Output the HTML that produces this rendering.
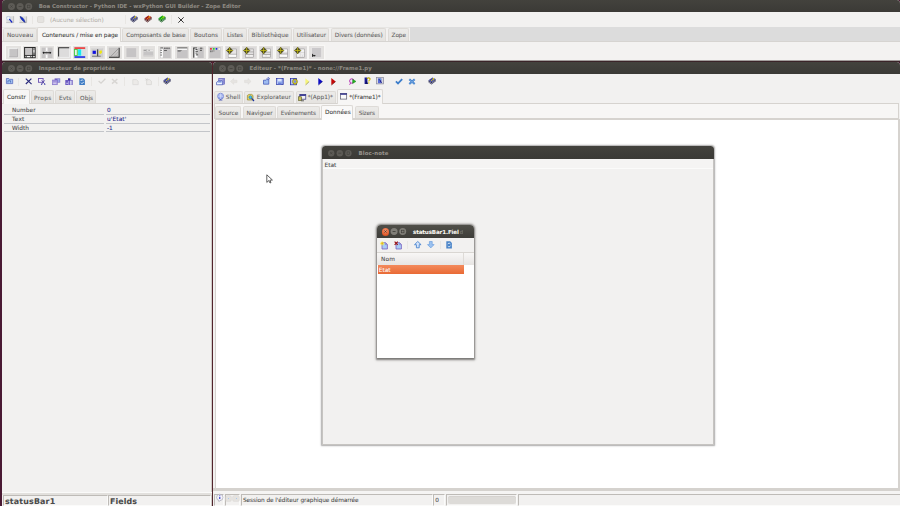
<!DOCTYPE html>
<html lang="fr">
<head>
<meta charset="utf-8">
<title>Boa Constructor</title>
<style>
html,body{margin:0;padding:0;}
body{width:900px;height:506px;overflow:hidden;background:#4a1a34;position:relative;font-family:"DejaVu Sans","Liberation Sans",sans-serif;font-size:5.8px;color:#4c4c4c;}
.win{position:absolute;background:#f2f1f0;overflow:hidden;border-radius:3.5px 3.5px 0 0;}
.tb{position:absolute;left:0;right:0;top:0;background:linear-gradient(#43423d,#3b3a36);}
.tb .t{position:absolute;top:0;font-weight:bold;font-size:6.5px;color:#8c8881;white-space:nowrap;}
.dot{position:absolute;width:7px;height:7px;border-radius:50%;background:#5d5b56;}
.dot i{position:absolute;left:2px;top:2px;width:3px;height:3px;display:block;}
.tab{position:absolute;box-sizing:border-box;background:linear-gradient(#ecebe9,#e5e3e0);border:1px solid #dedbd7;border-bottom:none;border-radius:2px 2px 0 0;color:#5e5e5e;white-space:nowrap;text-align:center;overflow:hidden;}
.tab.on{background:#f7f6f5;color:#3c3c3c;border-color:#dcd9d5;z-index:2;}
.tab.wh{background:linear-gradient(#f9f8f7,#fdfdfd);}
.hl{position:absolute;height:1px;background:#d6d3cf;}
.sep{position:absolute;width:1px;background:#e8e6e3;}
.ic{position:absolute;overflow:visible;z-index:3;}
.lbl{position:absolute;white-space:nowrap;z-index:3;-webkit-text-stroke:0.07px currentColor;}
.pb{position:absolute;top:45.8px;width:14.7px;height:13.3px;background:#e3e1df;box-shadow:0 0 0 1.2px #f8f7f6;}
.pb svg{position:absolute;left:0;top:0;}
.rl{position:absolute;height:1px;background:#c3c5c9;}
.fld{position:absolute;box-sizing:border-box;border:1px solid #bebbb7;border-right-color:#fbfbfa;border-bottom-color:#fbfbfa;background:#f2f1f0;}
</style>
</head>
<body>
<div style="position:absolute;left:2px;right:0;top:60px;height:1px;background:#a39d9c"></div><div style="position:absolute;left:2px;right:0;top:61px;height:1px;background:#3a2428"></div><div style="position:absolute;left:212px;width:1px;top:61px;bottom:0;background:#52242c"></div>
<div class="win" id="main" style="left:2px;top:0;width:898px;height:60px;">
<div class="tb" style="height:12px;"><svg class="ic" style="left:5.8px;top:3.1px" width="24.2" height="7" viewBox="0 0 24.2 7"><circle cx="3.5" cy="3.5" r="3.5" fill="#5d5b56"/><g transform="translate(3.5 3.5)"><path d="M-1.1 -1.1 L1.1 1.1 M1.1 -1.1 L-1.1 1.1" stroke="#42413c" stroke-width="0.7"/></g><circle cx="12.1" cy="3.5" r="3.5" fill="#5d5b56"/><g transform="translate(12.1 3.5)"><path d="M-1.5 0 H1.5" stroke="#42413c" stroke-width="0.8"/></g><circle cx="20.7" cy="3.5" r="3.5" fill="#5d5b56"/><g transform="translate(20.7 3.5)"><rect x="-1.3" y="-1.3" width="2.6" height="2.6" fill="none" stroke="#42413c" stroke-width="0.6"/></g></svg><span class="lbl" style="left:36.75px;top:4.00px;font-size:5.4px;line-height:5.4px;color:#8c8881;letter-spacing:-0.009px;font-weight:bold;font-family:'DejaVu Sans',sans-serif;">Boa Constructor - Python IDE - wxPython GUI Builder - Zope Editor</span></div>
<svg class="ic" style="left:4px;top:16px" width="8" height="7" viewBox="0 0 8 7"><rect x="0.2" y="0.2" width="7.4" height="6.4" fill="#dedede"/><path d="M0.2 6.6 H7.6 V0.2" fill="none" stroke="#a8a8a8" stroke-width="0.6"/><circle cx="2.4" cy="2.2" r="1.8" fill="#f0f6fc" stroke="#a8c0e0" stroke-width="0.6"/><path d="M3.6 3.4 L5.8 6" stroke="#1626c4" stroke-width="1.3" stroke-linecap="round"/></svg><svg class="ic" style="left:17.3px;top:16px" width="8" height="7" viewBox="0 0 8 7"><rect x="0.6" y="0.4" width="7" height="6.2" fill="#dcdcdc"/><path d="M0.4 6.6 H7.6 V0.4" fill="none" stroke="#a0a0a0" stroke-width="0.6"/><path d="M1 0.4 C3.4 1 5.6 3.4 6.2 6.4 C3.8 5.4 1.8 3 1 0.4 Z" fill="#1030d8" stroke="#141c70" stroke-width="0.5"/></svg><div class="sep" style="left:30px;top:16px;height:8px"></div><svg class="ic" style="left:34.8px;top:16px" width="7.6" height="7.2" viewBox="0 0 7.6 7.2"><rect x="0.5" y="0.5" width="6.4" height="6" rx="1.1" fill="#e5e3e0" stroke="#d5d2ce" stroke-width="0.7"/></svg><span class="lbl" style="left:48.00px;top:18.00px;font-size:5.8px;line-height:5.8px;color:#b7b3ad;letter-spacing:-0.026px;font-family:'DejaVu Sans',sans-serif;">(Aucune sélection)</span>
<div class="sep" style="left:122.5px;top:15px;height:9px"></div><svg class="ic" style="left:128.4px;top:15px" width="8.2" height="8.2" viewBox="0 0 8.2 8.2"><path d="M0.5 3.2 L0.7 5.4 L3.5 7.6 L7.7 4.2 L7.6 2 L3.6 5.2 Z" fill="#1c1e48"/><path d="M1 4.9 L3.6 6.6 L7.4 3.4" fill="none" stroke="#e4e4ea" stroke-width="0.7"/><path d="M0.5 3.2 L4.4 0.5 L7.6 2 L3.6 5.2 Z" fill="#454a9c"/><path d="M5.8 1.5 L4.6 2.6 L3.2 4" fill="none" stroke="#e0d020" stroke-width="0.9"/><circle cx="5.4" cy="1.9" r="0.8" fill="#e0d020"/></svg><svg class="ic" style="left:142.2px;top:15px" width="8.2" height="8.2" viewBox="0 0 8.2 8.2"><path d="M0.5 3.2 L0.7 5.4 L3.5 7.6 L7.7 4.2 L7.6 2 L3.6 5.2 Z" fill="#481010"/><path d="M1 4.9 L3.6 6.6 L7.4 3.4" fill="none" stroke="#e4e4ea" stroke-width="0.7"/><path d="M0.5 3.2 L4.4 0.5 L7.6 2 L3.6 5.2 Z" fill="#a01a14"/><path d="M5.8 1.5 L4.6 2.6 L3.2 4" fill="none" stroke="#f0a020" stroke-width="0.9"/><circle cx="5.4" cy="1.9" r="0.8" fill="#f0a020"/></svg><svg class="ic" style="left:156px;top:15px" width="8.2" height="8.2" viewBox="0 0 8.2 8.2"><path d="M0.5 3.2 L0.7 5.4 L3.5 7.6 L7.7 4.2 L7.6 2 L3.6 5.2 Z" fill="#0a5a10"/><path d="M1 4.9 L3.6 6.6 L7.4 3.4" fill="none" stroke="#e4e4ea" stroke-width="0.7"/><path d="M0.5 3.2 L4.4 0.5 L7.6 2 L3.6 5.2 Z" fill="#12a816"/><path d="M5.8 1.5 L4.6 2.6 L3.2 4" fill="none" stroke="#a8d818" stroke-width="0.9"/><circle cx="5.4" cy="1.9" r="0.8" fill="#a8d818"/></svg><div class="sep" style="left:169px;top:15px;height:9px"></div><svg class="ic" style="left:176px;top:16.7px" width="6" height="6" viewBox="0 0 6 6"><path d="M0.6 0.6 L5.4 5.4 M5.4 0.6 L0.6 5.4" stroke="#222" stroke-width="0.9" stroke-linecap="round"/></svg>
<div style="position:absolute;left:0;right:0;top:27px;height:1px;background:#e6e5e3"></div><div style="position:absolute;left:407.5px;right:0;top:27px;height:14.5px;background:#dcdcdc"></div><div class="hl" style="left:0;right:0;top:41px;background:#d6d4d1"></div><div style="position:absolute;left:0;right:0;top:42px;height:19px;background:#f3f2f1"></div><div class="tab" style="left:1px;top:28px;width:34px;height:13px;"></div><span class="lbl" style="left:4.90px;top:33.00px;font-size:5.8px;line-height:5.8px;color:#636363;letter-spacing:0.068px;font-family:'DejaVu Sans',sans-serif;">Nouveau</span><div class="tab on" style="left:35px;top:27px;width:84px;height:15px;"></div><span class="lbl" style="left:39.90px;top:33.00px;font-size:5.8px;line-height:5.8px;color:#3c3c3c;letter-spacing:-0.090px;font-family:'DejaVu Sans',sans-serif;">Conteneurs / mise en page</span><div class="tab" style="left:120px;top:28px;width:67px;height:13px;"></div><span class="lbl" style="left:124.25px;top:33.00px;font-size:5.8px;line-height:5.8px;color:#636363;letter-spacing:-0.085px;font-family:'DejaVu Sans',sans-serif;">Composants de base</span><div class="tab" style="left:187.8px;top:28px;width:32.2px;height:13px;"></div><span class="lbl" style="left:192.00px;top:33.00px;font-size:5.8px;line-height:5.8px;color:#636363;letter-spacing:0.046px;font-family:'DejaVu Sans',sans-serif;">Boutons</span><div class="tab" style="left:221px;top:28px;width:23.5px;height:13px;"></div><span class="lbl" style="left:225.00px;top:33.00px;font-size:5.8px;line-height:5.8px;color:#636363;letter-spacing:-0.146px;font-family:'DejaVu Sans',sans-serif;">Listes</span><div class="tab" style="left:245.6px;top:28px;width:44.4px;height:13px;"></div><span class="lbl" style="left:249.40px;top:33.00px;font-size:5.8px;line-height:5.8px;color:#636363;letter-spacing:0.074px;font-family:'DejaVu Sans',sans-serif;">Bibliothèque</span><div class="tab" style="left:291.2px;top:28px;width:36.3px;height:13px;"></div><span class="lbl" style="left:294.80px;top:33.00px;font-size:5.8px;line-height:5.8px;color:#636363;letter-spacing:-0.053px;font-family:'DejaVu Sans',sans-serif;">Utilisateur</span><div class="tab" style="left:328.8px;top:28px;width:55.4px;height:13px;"></div><span class="lbl" style="left:332.80px;top:33.00px;font-size:5.8px;line-height:5.8px;color:#636363;letter-spacing:-0.106px;font-family:'DejaVu Sans',sans-serif;">Divers (données)</span><div class="tab" style="left:385.6px;top:28px;width:21.8px;height:13px;"></div><span class="lbl" style="left:389.60px;top:33.00px;font-size:5.8px;line-height:5.8px;color:#636363;letter-spacing:-0.124px;font-family:'DejaVu Sans',sans-serif;">Zope</span>
<div class="pb" style="left:4.0px"><svg width="14.7" height="13.3" viewBox="0 0 14.5 13.5" preserveAspectRatio="none"><rect x="2.2" y="1.8" width="10" height="9.8" fill="#ececec"/><rect x="3" y="2.6" width="8.4" height="8.4" fill="#c6c4c5"/><path d="M3 11 V2.6 H11.4" fill="none" stroke="#f6f6f6" stroke-width="0.6"/><path d="M3.2 11 H11.4 V2.8" fill="none" stroke="#a6a4a6" stroke-width="0.7"/></svg></div><div class="pb" style="left:20.9px"><svg width="14.7" height="13.3" viewBox="0 0 14.5 13.5" preserveAspectRatio="none"><rect x="1.6" y="1.5" width="10.4" height="10.4" fill="#c6c4c5" stroke="#1a1a1a" stroke-width="0.9"/><path d="M1.6 9.6 H12 M9.6 1.5 V11.9" stroke="#1a1a1a" stroke-width="0.8"/><rect x="10.1" y="2" width="1.4" height="7.2" fill="#3c3c3c"/><rect x="2" y="10.1" width="7.2" height="1.4" fill="#3c3c3c"/><rect x="3.8" y="10.2" width="3.4" height="1.2" fill="#fff"/><rect x="10.2" y="3.6" width="1.2" height="3.2" fill="#fff"/><rect x="10.2" y="10.2" width="1.2" height="1.2" fill="#f4f4f4"/><rect x="2.3" y="10.3" width="0.9" height="0.9" fill="#eee"/><rect x="7.9" y="10.3" width="0.9" height="0.9" fill="#eee"/><rect x="10.3" y="2.2" width="0.9" height="0.9" fill="#eee"/><rect x="10.3" y="7.6" width="0.9" height="0.9" fill="#eee"/></svg></div><div class="pb" style="left:37.7px"><svg width="14.7" height="13.3" viewBox="0 0 14.5 13.5" preserveAspectRatio="none"><rect x="1.6" y="1.6" width="10.8" height="10.6" fill="#c6c4c5"/><path d="M5.6 1.6 V12.2 M7.6 1.6 V12.2" stroke="#e8e6e6" stroke-width="0.5"/><rect x="6" y="1.6" width="1.3" height="3.4" fill="#fff"/><rect x="6" y="8.8" width="1.3" height="3.4" fill="#fff"/><path d="M3 6.9 H10.6" stroke="#1a1a1a" stroke-width="1"/><path d="M3.9 5.6 L2.4 6.9 L3.9 8.2 Z M9.7 5.6 L11.2 6.9 L9.7 8.2 Z" fill="#1a1a1a"/></svg></div><div class="pb" style="left:54.6px"><svg width="14.7" height="13.3" viewBox="0 0 14.5 13.5" preserveAspectRatio="none"><rect x="1.6" y="1.6" width="11" height="10.4" fill="#dddcdc"/><path d="M1.6 10.6 V1.7 H12" fill="none" stroke="#2a2a2a" stroke-width="1"/><path d="M2.4 11.6 H12.4 V2.6" fill="none" stroke="#f4f4f4" stroke-width="0.7"/></svg></div><div class="pb" style="left:71.4px"><svg width="14.7" height="13.3" viewBox="0 0 14.5 13.5" preserveAspectRatio="none"><rect x="1" y="1.2" width="11.8" height="11.4" fill="#dcdcdc"/><rect x="1.4" y="1.4" width="10.6" height="1.4" fill="#f01818"/><rect x="1.4" y="10.4" width="10.6" height="1.6" fill="#1828e8"/><rect x="1.4" y="3.6" width="2.8" height="6" fill="#e8f4e8" stroke="#40c840" stroke-width="0.9"/><rect x="5" y="3.4" width="3.2" height="6.4" fill="#18e8f0"/><rect x="8.2" y="3.4" width="0.9" height="6.4" fill="#a8f4f8"/></svg></div><div class="pb" style="left:88.2px"><svg width="14.7" height="13.3" viewBox="0 0 14.5 13.5" preserveAspectRatio="none"><rect x="1.4" y="2" width="11.6" height="9.6" fill="#d0cece"/><path d="M1.4 2.2 H12.6" stroke="#e8e8e8" stroke-width="0.6"/><rect x="2.6" y="4.8" width="3.2" height="3.2" fill="#1010e0"/><path d="M7.6 3.4 V10.4" stroke="#222" stroke-width="0.9"/><path d="M2 10.4 H10.6" stroke="#555" stroke-width="0.7"/><path d="M9.2 5 L11.4 4.4 L12 6.4 L10.6 8 L9.2 7.4 Z" fill="#f0e810"/></svg></div><div class="pb" style="left:105.1px"><svg width="14.7" height="13.3" viewBox="0 0 14.5 13.5" preserveAspectRatio="none"><rect x="1.8" y="1.6" width="10.4" height="10.2" fill="#c8c6c6"/><path d="M2 11.4 H12 V1.8" fill="none" stroke="#2a2a2a" stroke-width="1"/><path d="M11.4 2.4 L3.4 11" stroke="#8a8888" stroke-width="0.7"/><path d="M11.4 5.6 L6.6 11 M11.4 8.4 L9 11" stroke="#8a8888" stroke-width="0.6" stroke-dasharray="0.8 0.6"/></svg></div><div class="pb" style="left:122.0px"><svg width="14.7" height="13.3" viewBox="0 0 14.5 13.5" preserveAspectRatio="none"><rect x="2.4" y="2.2" width="9.6" height="9" fill="#c6c4c5"/></svg></div><div class="pb" style="left:138.8px"><svg width="14.7" height="13.3" viewBox="0 0 14.5 13.5" preserveAspectRatio="none"><rect x="2.4" y="3.6" width="9.8" height="7" fill="#c6c4c5"/><rect x="2.4" y="3.8" width="9.8" height="1.7" fill="#e8e6e6"/><path d="M2.6 4.4 H5 M7.4 4.4 H8.6" stroke="#555" stroke-width="0.6"/><path d="M5.6 3.4 V5.6" stroke="#777" stroke-width="0.4"/><path d="M2.4 9.6 H12.2" stroke="#dcdada" stroke-width="0.5"/></svg></div><div class="pb" style="left:155.7px"><svg width="14.7" height="13.3" viewBox="0 0 14.5 13.5" preserveAspectRatio="none"><rect x="2" y="1.6" width="10.6" height="10.6" fill="#c6c4c5"/><rect x="2.6" y="1.8" width="2.2" height="10" fill="#fff"/><path d="M2.4 2 H5 M2.4 4.4 H3.8 M2.4 6.8 H3.8 M2.4 9.2 H3.8" stroke="#1a1a1a" stroke-width="0.7"/><path d="M6 2.2 H11.6" stroke="#1a1a1a" stroke-width="0.8" stroke-dasharray="1.6 0.5"/><path d="M6 4.6 H8.8" stroke="#1a1a1a" stroke-width="0.6"/></svg></div><div class="pb" style="left:172.5px"><svg width="14.7" height="13.3" viewBox="0 0 14.5 13.5" preserveAspectRatio="none"><rect x="2" y="1.6" width="10.6" height="10.6" fill="#c6c4c5"/><rect x="2.4" y="2.4" width="9.4" height="1.5" fill="#fff"/><path d="M2.2 1.9 H12.2" stroke="#333" stroke-width="0.7"/><path d="M2.6 4.6 H6.6 M2.6 5.4 H5.6" stroke="#444" stroke-width="0.5"/></svg></div><div class="pb" style="left:189.4px"><svg width="14.7" height="13.3" viewBox="0 0 14.5 13.5" preserveAspectRatio="none"><rect x="2" y="1.6" width="10.6" height="10.6" fill="#c6c4c5"/><rect x="3" y="1.8" width="3.4" height="10" fill="#fff"/><path d="M2.8 1.8 V11.8" stroke="#1a1a1a" stroke-width="0.9"/><path d="M2.4 2 H6 M4.4 3.6 H6.4 M4.4 5.4 H6.8 M4.4 7.2 H6.4 M4.8 9 H7" stroke="#1a1a1a" stroke-width="0.8"/><path d="M8.8 2.2 H11.2 M8.8 4.4 H10.8" stroke="#1a1a1a" stroke-width="0.7"/></svg></div><div class="pb" style="left:206.2px"><svg width="14.7" height="13.3" viewBox="0 0 14.5 13.5" preserveAspectRatio="none"><rect x="1.4" y="1" width="11" height="11.2" fill="#c6c4c5"/><circle cx="2.9" cy="2.9" r="0.9" fill="#f01010"/><circle cx="5.7" cy="2.9" r="0.9" fill="#10e010"/><circle cx="8.4" cy="2.9" r="0.9" fill="#1020f0"/><rect x="10.4" y="2.2" width="1.4" height="1.8" fill="#f4f4f4"/><path d="M2 5 H6.8 M2 5.8 H4.4" stroke="#333" stroke-width="0.5" stroke-dasharray="1.2 0.4"/></svg></div><div class="pb" style="left:223.1px"><svg width="14.7" height="13.3" viewBox="0 0 14.5 13.5" preserveAspectRatio="none"><rect x="1" y="0.8" width="12.8" height="12" fill="#dcdada"/><rect x="3.2" y="3" width="8.2" height="8.4" fill="#e8e6e6" stroke="#8c8a8a" stroke-width="0.5"/><path d="M3.2 8.4 H11.4" stroke="#8c8a8a" stroke-width="0.6"/><rect x="3.6" y="8.9" width="7.4" height="2.1" fill="#fbfbfb"/><path d="M4.6 1.2 L7.8 4.6 L4.6 8 L1.4 4.6 Z" fill="#4a481c"/><path d="M4.6 1.2 V8 M1.4 4.6 H7.8" stroke="#c4bc18" stroke-width="0.85"/><path d="M4.6 1.2 L7.8 4.6 L4.6 8 L1.4 4.6 Z" fill="none" stroke="#3c3c24" stroke-width="0.4"/></svg></div><div class="pb" style="left:239.9px"><svg width="14.7" height="13.3" viewBox="0 0 14.5 13.5" preserveAspectRatio="none"><rect x="1" y="0.8" width="12.8" height="12" fill="#dcdada"/><rect x="3.2" y="3" width="8.2" height="8.4" fill="#e4e2e2" stroke="#8c8a8a" stroke-width="0.5"/><path d="M3.2 6 H11.4 M3.2 8.6 H11.4" stroke="#8c8a8a" stroke-width="0.6"/><path d="M4 10 H6.4 M7.6 10 H10.6" stroke="#fff" stroke-width="0.9"/><path d="M4.6 1.2 L7.8 4.6 L4.6 8 L1.4 4.6 Z" fill="#4a481c"/><path d="M4.6 1.2 V8 M1.4 4.6 H7.8" stroke="#c4bc18" stroke-width="0.85"/><path d="M4.6 1.2 L7.8 4.6 L4.6 8 L1.4 4.6 Z" fill="none" stroke="#3c3c24" stroke-width="0.4"/></svg></div><div class="pb" style="left:256.8px"><svg width="14.7" height="13.3" viewBox="0 0 14.5 13.5" preserveAspectRatio="none"><rect x="1" y="0.8" width="12.8" height="12" fill="#dcdada"/><rect x="3.2" y="3" width="8.2" height="8.4" fill="#e4e2e2" stroke="#8c8a8a" stroke-width="0.5"/><rect x="7" y="3.6" width="4" height="2.2" fill="#fbfbfb"/><path d="M3.2 6.2 H11.4 M3.2 8.6 H11.4" stroke="#8c8a8a" stroke-width="0.6"/><path d="M4 10 H6.4 M7.6 10 H10.6" stroke="#fff" stroke-width="0.9"/><path d="M4.6 1.2 L7.8 4.6 L4.6 8 L1.4 4.6 Z" fill="#4a481c"/><path d="M4.6 1.2 V8 M1.4 4.6 H7.8" stroke="#c4bc18" stroke-width="0.85"/><path d="M4.6 1.2 L7.8 4.6 L4.6 8 L1.4 4.6 Z" fill="none" stroke="#3c3c24" stroke-width="0.4"/></svg></div><div class="pb" style="left:273.6px"><svg width="14.7" height="13.3" viewBox="0 0 14.5 13.5" preserveAspectRatio="none"><rect x="1" y="0.8" width="12.8" height="12" fill="#dcdada"/><rect x="3.2" y="3" width="8.2" height="8.4" fill="#e0dede" stroke="#8c8a8a" stroke-width="0.5"/><rect x="7" y="3.6" width="4" height="2.2" fill="#fbfbfb"/><path d="M3.2 8.2 H11.4" stroke="#8c8a8a" stroke-width="0.6"/><rect x="3.6" y="8.8" width="7.4" height="2.2" fill="#fbfbfb"/><path d="M4.6 1.2 L7.8 4.6 L4.6 8 L1.4 4.6 Z" fill="#4a481c"/><path d="M4.6 1.2 V8 M1.4 4.6 H7.8" stroke="#c4bc18" stroke-width="0.85"/><path d="M4.6 1.2 L7.8 4.6 L4.6 8 L1.4 4.6 Z" fill="none" stroke="#3c3c24" stroke-width="0.4"/></svg></div><div class="pb" style="left:290.5px"><svg width="14.7" height="13.3" viewBox="0 0 14.5 13.5" preserveAspectRatio="none"><rect x="1" y="0.8" width="12.8" height="12" fill="#dcdada"/><rect x="3.2" y="3" width="8.2" height="8.4" fill="#dedcdc" stroke="#8c8a8a" stroke-width="0.5"/><rect x="7.4" y="3.6" width="3.6" height="2.4" fill="#f4f4f4"/><rect x="3.8" y="7.4" width="2.8" height="3.4" fill="#f4f4f4"/><rect x="7.6" y="7.4" width="3.4" height="1.3" fill="#f4f4f4"/><rect x="7.6" y="9.4" width="1.3" height="1.3" fill="#f4f4f4"/><rect x="9.7" y="9.4" width="1.3" height="1.3" fill="#f4f4f4"/><path d="M4.6 1.2 L7.8 4.6 L4.6 8 L1.4 4.6 Z" fill="#4a481c"/><path d="M4.6 1.2 V8 M1.4 4.6 H7.8" stroke="#c4bc18" stroke-width="0.85"/><path d="M4.6 1.2 L7.8 4.6 L4.6 8 L1.4 4.6 Z" fill="none" stroke="#3c3c24" stroke-width="0.4"/></svg></div><div class="pb" style="left:307.3px"><svg width="14.7" height="13.3" viewBox="0 0 14.5 13.5" preserveAspectRatio="none"><rect x="1.6" y="1" width="11.4" height="11.6" fill="#e6e4e4"/><rect x="3" y="2" width="9" height="9.4" fill="#cac8ca"/><path d="M3.6 8 V11 M3.6 9.8 H6" stroke="#111" stroke-width="0.9"/><path d="M5.4 9 L6.6 9.8 L5.4 10.6 Z" fill="#111"/></svg></div>
</div>

<div class="win" id="insp" style="left:2px;top:62px;width:210px;height:444px;">
<div class="tb" style="height:12px;"><svg class="ic" style="left:5.8px;top:3.1px" width="24.2" height="7" viewBox="0 0 24.2 7"><circle cx="3.5" cy="3.5" r="3.5" fill="#5d5b56"/><g transform="translate(3.5 3.5)"><path d="M-1.1 -1.1 L1.1 1.1 M1.1 -1.1 L-1.1 1.1" stroke="#42413c" stroke-width="0.7"/></g><circle cx="12.1" cy="3.5" r="3.5" fill="#5d5b56"/><g transform="translate(12.1 3.5)"><path d="M-1.5 0 H1.5" stroke="#42413c" stroke-width="0.8"/></g><circle cx="20.7" cy="3.5" r="3.5" fill="#5d5b56"/><g transform="translate(20.7 3.5)"><rect x="-1.3" y="-1.3" width="2.6" height="2.6" fill="none" stroke="#42413c" stroke-width="0.6"/></g></svg><span class="lbl" style="left:36.75px;top:4.00px;font-size:5.4px;line-height:5.4px;color:#8c8881;letter-spacing:0.029px;font-weight:bold;font-family:'DejaVu Sans',sans-serif;">Inspecteur de propriétés</span></div>
<svg class="ic" style="left:4px;top:16.2px" width="7.2" height="6" viewBox="0 0 7.2 6"><path d="M0.4 0.5 H2.8 L3.4 1.3 H6.7 V5.6 H0.4 Z" fill="#a4c4f2" stroke="#4a5cb8" stroke-width="0.7"/><path d="M1.9 4.6 V2.8 H4.6 V4.6" fill="none" stroke="#3a58b0" stroke-width="0.7"/></svg><div class="sep" style="left:16.3px;top:15.5px;height:8px"></div><svg class="ic" style="left:22.8px;top:15.9px" width="7.4" height="6.8" viewBox="0 0 7.4 6.8"><path d="M0.8 0.6 L6.6 6.2 M6.4 0.6 L0.8 6" stroke="#2a2a7c" stroke-width="1.15"/></svg><svg class="ic" style="left:36.2px;top:15.6px" width="8" height="7.2" viewBox="0 0 8 7.2"><rect x="0.5" y="0.5" width="4.6" height="3.8" fill="#f4f0fa" stroke="#6a50b0" stroke-width="0.9"/><path d="M3.6 2.4 L6.8 6 M6.6 2.4 L3.8 6" stroke="#4a3aa0" stroke-width="0.8"/><circle cx="3.6" cy="6.3" r="0.7" fill="#4a4ab0"/><circle cx="6.8" cy="6.3" r="0.7" fill="#4a4ab0"/></svg><svg class="ic" style="left:49.6px;top:15.6px" width="8.6" height="7.2" viewBox="0 0 8.6 7.2"><rect x="2.6" y="0.4" width="5.6" height="4.2" fill="#7464c4"/><rect x="5.4" y="0.8" width="2.2" height="3.2" fill="#9aa8e8"/><rect x="0.4" y="2" width="5" height="4.8" fill="#a494dc" stroke="#7a68c4" stroke-width="0.5"/><path d="M1.2 5.2 H4.4" stroke="#f4f0fc" stroke-width="0.8"/></svg><svg class="ic" style="left:63px;top:15.6px" width="8" height="7.2" viewBox="0 0 8 7.2"><rect x="0.3" y="2" width="7.4" height="5" fill="#6c5ac2"/><rect x="3" y="0.3" width="2.4" height="2.2" fill="#3a2a98"/><rect x="5.2" y="2.6" width="1.4" height="4.2" fill="#e6ecfc"/><rect x="3.2" y="2.8" width="0.9" height="4" fill="#b0a4e4"/><rect x="1.4" y="4.8" width="1.4" height="0.9" fill="#f4f0fc"/></svg><svg class="ic" style="left:77.2px;top:15.6px" width="6.2" height="7.2" viewBox="0 0 6.2 7.2"><path d="M0.3 0.3 H4.2 L5.9 2 V6.9 H0.3 Z" fill="#3f7cc4"/><path d="M1.6 3 A1.7 1.7 0 0 1 4.4 2.6 M4.6 4.2 A1.7 1.7 0 0 1 1.8 4.8" fill="none" stroke="#f0f6fc" stroke-width="0.9"/><path d="M1.2 6 L4.8 1.4" stroke="#3f7cc4" stroke-width="0.5"/></svg><div class="sep" style="left:89.2px;top:15px;height:9px"></div><svg class="ic" style="left:95.6px;top:16.2px" width="8" height="6" viewBox="0 0 8 6"><path d="M0.6 3 L3 5.2 L7.4 0.8" fill="none" stroke="#d6d4d1" stroke-width="1.3"/></svg><svg class="ic" style="left:109px;top:15.8px" width="7.4" height="6.6" viewBox="0 0 7.4 6.6"><path d="M1 1 L6.4 5.6 M6.4 1 L1 5.6" stroke="#d8d6d3" stroke-width="1.5"/></svg><div class="sep" style="left:122.4px;top:15px;height:9px"></div><svg class="ic" style="left:129.6px;top:15.6px" width="7" height="7" viewBox="0 0 7 7"><path d="M0.8 1.6 H4.4 L6.2 3.2 V6.6 H0.8 Z" fill="#eceae8" stroke="#dad8d5" stroke-width="0.7"/></svg><svg class="ic" style="left:143px;top:15.6px" width="7" height="7" viewBox="0 0 7 7"><path d="M1.6 1.6 H4.6 L6.4 3.2 V6.6 H1.6 Z" fill="#eceae8" stroke="#d6d4d1" stroke-width="0.7"/><path d="M0.4 0.4 L2.4 2.4 M2.4 0.4 L0.4 2.4" stroke="#d0cecb" stroke-width="0.7"/></svg><div class="sep" style="left:155.8px;top:15px;height:9px"></div><svg class="ic" style="left:161.2px;top:15.4px" width="8.2" height="8.2" viewBox="0 0 8.2 8.2"><path d="M0.5 3.2 L0.7 5.4 L3.5 7.6 L7.7 4.2 L7.6 2 L3.6 5.2 Z" fill="#1c1e48"/><path d="M1 4.9 L3.6 6.6 L7.4 3.4" fill="none" stroke="#e4e4ea" stroke-width="0.7"/><path d="M0.5 3.2 L4.4 0.5 L7.6 2 L3.6 5.2 Z" fill="#454a9c"/><path d="M5.8 1.5 L4.6 2.6 L3.2 4" fill="none" stroke="#e0d020" stroke-width="0.9"/><circle cx="5.4" cy="1.9" r="0.8" fill="#e0d020"/></svg>
<div class="hl" style="left:0;right:0;top:41px;background:#dad7d3"></div><div class="tab on" style="left:1.1px;top:27.4px;width:26.5px;height:14.6px;"></div><span class="lbl" style="left:4.90px;top:33.00px;font-size:5.8px;line-height:5.8px;color:#3c3c3c;letter-spacing:0.029px;font-family:'DejaVu Sans',sans-serif;">Constr</span><div class="tab" style="left:28.6px;top:28.4px;width:23.8px;height:12.6px;"></div><span class="lbl" style="left:32.00px;top:34.00px;font-size:5.8px;line-height:5.8px;color:#636363;letter-spacing:0.336px;font-family:'DejaVu Sans',sans-serif;">Props</span><div class="tab" style="left:53.4px;top:28.4px;width:19.6px;height:12.6px;"></div><span class="lbl" style="left:57.10px;top:34.00px;font-size:5.8px;line-height:5.8px;color:#636363;letter-spacing:0.036px;font-family:'DejaVu Sans',sans-serif;">Evts</span><div class="tab" style="left:74px;top:28.4px;width:20.25px;height:12.6px;"></div><span class="lbl" style="left:78.00px;top:34.00px;font-size:5.8px;line-height:5.8px;color:#636363;letter-spacing:0.073px;font-family:'DejaVu Sans',sans-serif;">Objs</span>
<div class="rl" style="left:2.4px;top:52.2px;width:99.6px"></div><div class="rl" style="left:104px;top:52.2px;width:104px"></div><span class="lbl" style="left:9.90px;top:46.00px;font-size:5.8px;line-height:5.8px;color:#4a4a4a;letter-spacing:0.080px;font-family:'DejaVu Sans',sans-serif;">Number</span><span class="lbl" style="left:105.10px;top:46.00px;font-size:5.8px;line-height:5.8px;color:#26268c;letter-spacing:0.310px;font-family:'DejaVu Sans',sans-serif;">0</span><div class="rl" style="left:2.4px;top:60.7px;width:99.6px"></div><div class="rl" style="left:104px;top:60.7px;width:104px"></div><span class="lbl" style="left:9.90px;top:55.00px;font-size:5.8px;line-height:5.8px;color:#4a4a4a;letter-spacing:0.256px;font-family:'DejaVu Sans',sans-serif;">Text</span><span class="lbl" style="left:105.10px;top:55.00px;font-size:5.8px;line-height:5.8px;color:#26268c;letter-spacing:0.086px;font-family:'DejaVu Sans',sans-serif;">u'Etat'</span><div class="rl" style="left:2.4px;top:69.2px;width:99.6px"></div><div class="rl" style="left:104px;top:69.2px;width:104px"></div><span class="lbl" style="left:9.90px;top:64.00px;font-size:5.8px;line-height:5.8px;color:#4a4a4a;letter-spacing:0.062px;font-family:'DejaVu Sans',sans-serif;">Width</span><span class="lbl" style="left:105.10px;top:64.00px;font-size:5.8px;line-height:5.8px;color:#26268c;letter-spacing:-0.183px;font-family:'DejaVu Sans',sans-serif;">-1</span>
<div style="position:absolute;left:209px;top:12px;width:1px;bottom:0;background:#cfccc8"></div><div style="position:absolute;left:0;right:0;top:430px;height:1px;background:#fafaf9"></div><div style="position:absolute;left:0;right:0;top:431px;height:2px;background:#e2e0dd"></div><div class="fld" style="left:1px;top:433px;width:104.5px;height:11px"></div><div class="fld" style="left:106px;top:433px;width:103px;height:11px"></div><span class="lbl" style="left:3.00px;top:436.00px;font-size:7.9px;line-height:7.9px;color:#4a4a4a;letter-spacing:0.171px;font-weight:bold;font-family:'DejaVu Sans',sans-serif;">statusBar1</span><span class="lbl" style="left:108.00px;top:436.00px;font-size:7.9px;line-height:7.9px;color:#4a4a4a;letter-spacing:0.094px;font-weight:bold;font-family:'DejaVu Sans',sans-serif;">Fields</span>
</div>

<div class="win" id="edit" style="left:213px;top:62px;width:687px;height:444px;">
<div class="tb" style="height:12px;"><svg class="ic" style="left:5.8px;top:3.1px" width="24.2" height="7" viewBox="0 0 24.2 7"><circle cx="3.5" cy="3.5" r="3.5" fill="#5d5b56"/><g transform="translate(3.5 3.5)"><path d="M-1.1 -1.1 L1.1 1.1 M1.1 -1.1 L-1.1 1.1" stroke="#42413c" stroke-width="0.7"/></g><circle cx="12.1" cy="3.5" r="3.5" fill="#5d5b56"/><g transform="translate(12.1 3.5)"><path d="M-1.5 0 H1.5" stroke="#42413c" stroke-width="0.8"/></g><circle cx="20.7" cy="3.5" r="3.5" fill="#5d5b56"/><g transform="translate(20.7 3.5)"><rect x="-1.3" y="-1.3" width="2.6" height="2.6" fill="none" stroke="#42413c" stroke-width="0.6"/></g></svg><span class="lbl" style="left:36.50px;top:4.00px;font-size:5.4px;line-height:5.4px;color:#8c8881;letter-spacing:0.044px;font-weight:bold;font-family:'DejaVu Sans',sans-serif;">Editeur - *(Frame1)* - none://Frame1.py</span></div>
<svg class="ic" style="left:3.2px;top:15.8px" width="9" height="7.4" viewBox="0 0 9 7.4"><rect x="2.8" y="0.4" width="5.6" height="5.8" fill="#b4b4e8" stroke="#4a4ab0" stroke-width="0.6"/><rect x="6.4" y="1" width="1.6" height="4.6" fill="#8c8cd4"/><path d="M0.5 4.4 L2.6 2.6 H6 L6.6 4.4 V6.8 H0.5 Z" fill="#c4d4f6" stroke="#3a4ab0" stroke-width="0.6"/><path d="M1.2 5.6 H5.8" stroke="#fff" stroke-width="0.8"/><path d="M2.2 3.8 H5.2" stroke="#3a5ac0" stroke-width="0.7"/></svg><svg class="ic" style="left:17.2px;top:16px" width="7.6" height="6.8" viewBox="0 0 7.6 6.8"><path d="M0.5 3.4 L3.6 0.5 V2.2 H7 V4.6 H3.6 V6.3 Z" fill="#e6e4e1" stroke="#dcdad7" stroke-width="0.5"/></svg><svg class="ic" style="left:30.6px;top:16px" width="7.6" height="6.8" viewBox="0 0 7.6 6.8"><path d="M7.1 3.4 L4 0.5 V2.2 H0.6 V4.6 H4 V6.3 Z" fill="#e6e4e1" stroke="#dcdad7" stroke-width="0.5"/></svg><svg class="ic" style="left:49.8px;top:15.2px" width="8" height="7.6" viewBox="0 0 8 7.6"><path d="M0.5 3.2 H3 L3.6 2.6 H5.8 V7.2 H0.5 Z" fill="#9ebcf0" stroke="#3a50b4" stroke-width="0.7"/><path d="M3.4 2.2 C3.8 1 5.2 0.8 6 1.4 M5.2 0.3 L6.8 1.7 L5 2.6" fill="none" stroke="#4a5cc0" stroke-width="0.7"/></svg><svg class="ic" style="left:63.2px;top:15.8px" width="7.6" height="7" viewBox="0 0 7.6 7"><rect x="0.4" y="0.4" width="6.8" height="6.2" fill="#90a8ec" stroke="#3038a4" stroke-width="0.8"/><rect x="2" y="0.8" width="3.6" height="2.6" fill="#dce6fc"/><rect x="2.2" y="4.8" width="3.2" height="1.8" fill="#6a80d8"/><rect x="0.8" y="0.8" width="0.9" height="5.4" fill="#c0d0f8"/></svg><svg class="ic" style="left:77.2px;top:15.6px" width="7.8" height="7.2" viewBox="0 0 7.8 7.2"><rect x="0.4" y="0.4" width="6" height="6.4" fill="#7a8ce0" stroke="#3038a4" stroke-width="0.8"/><rect x="1.2" y="0.8" width="1.6" height="5.4" fill="#c8d4f8"/><circle cx="5" cy="3.6" r="2" fill="none" stroke="#d8cc18" stroke-width="1.2"/><circle cx="5" cy="3.6" r="2.6" fill="none" stroke="#5a5210" stroke-width="0.4"/><path d="M5 5 V6.8" stroke="#c8bc10" stroke-width="1.1"/></svg><svg class="ic" style="left:92px;top:16.2px" width="4.6" height="7.2" viewBox="0 0 4.6 7.2"><path d="M0.4 0.2 L4.2 3.6 L0.4 7 Z" fill="#f6f47a"/><path d="M0.6 7 L4.2 3.6" stroke="#8c8c58" stroke-width="0.7"/></svg><svg class="ic" style="left:104.8px;top:16.2px" width="5" height="7.2" viewBox="0 0 5 7.2"><path d="M0.3 0.1 L4.6 3.6 L0.3 7.1 Z" fill="#0c0cc4"/><path d="M0.5 7.1 L4.6 3.6" stroke="#06065a" stroke-width="0.5"/></svg><svg class="ic" style="left:118.2px;top:16.2px" width="5" height="7.2" viewBox="0 0 5 7.2"><path d="M0.3 0.1 L4.6 3.6 L0.3 7.1 Z" fill="#c40808"/><path d="M0.5 7.1 L4.6 3.6" stroke="#5a0404" stroke-width="0.6"/></svg><svg class="ic" style="left:136px;top:15.6px" width="7.4" height="7.2" viewBox="0 0 7.4 7.2"><circle cx="2.8" cy="3" r="2.2" fill="#f0e0f8" stroke="#b020b0" stroke-width="0.9"/><path d="M1.6 5 L0.6 6.8" stroke="#b020b0" stroke-width="0.9"/><path d="M3.6 1.2 L7 3.4 L3.6 5.6 Z" fill="#20b820" stroke="#0a700a" stroke-width="0.4"/></svg><svg class="ic" style="left:150.6px;top:15.4px" width="7" height="7.4" viewBox="0 0 7 7.4"><path d="M0.6 0.6 H3.4 V7 H0.6 Z" fill="#1a1a90"/><path d="M2.6 3.6 L4 7 L1.4 7 Z" fill="#101060"/><path d="M3.2 2 C3.4 0.4 6.2 0.4 6 2.2 C5.9 3.2 4.8 3.2 4.8 4.4" fill="none" stroke="#d8c810" stroke-width="1.2"/><circle cx="4.8" cy="6" r="0.7" fill="#d8c810"/><path d="M3.2 2 C3.4 0.4 6.2 0.4 6 2.2" fill="none" stroke="#504a08" stroke-width="0.3"/></svg><svg class="ic" style="left:163px;top:15.4px" width="8" height="7.4" viewBox="0 0 8 7.4"><rect x="0.5" y="0.5" width="7" height="6.4" fill="#d8d8e0" stroke="#88889a" stroke-width="0.7"/><rect x="2" y="1.4" width="3.4" height="4.8" fill="#5868d8"/><path d="M3 2 L5.6 5.8" stroke="#101070" stroke-width="0.9"/><path d="M3.4 3 L4.8 2.2" stroke="#60d0e8" stroke-width="0.8"/></svg><svg class="ic" style="left:182.2px;top:16.2px" width="8" height="6.6" viewBox="0 0 8 6.6"><path d="M0.9 3.4 L3 5.4 L7.2 1.2" fill="none" stroke="#3f7fcb" stroke-width="1.8"/></svg><svg class="ic" style="left:195.4px;top:15.8px" width="8" height="7.2" viewBox="0 0 8 7.2"><path d="M1.3 1.3 L6.7 6.1 M6.7 1.3 L1.3 6.1" stroke="#3f7fcb" stroke-width="2"/><path d="M1.3 1.3 L6.7 6.1 M6.7 1.3 L1.3 6.1" stroke="#9cc4f0" stroke-width="0.5"/></svg><svg class="ic" style="left:215px;top:15.4px" width="8.2" height="8.2" viewBox="0 0 8.2 8.2"><path d="M0.5 3.2 L0.7 5.4 L3.5 7.6 L7.7 4.2 L7.6 2 L3.6 5.2 Z" fill="#1c1e48"/><path d="M1 4.9 L3.6 6.6 L7.4 3.4" fill="none" stroke="#e4e4ea" stroke-width="0.7"/><path d="M0.5 3.2 L4.4 0.5 L7.6 2 L3.6 5.2 Z" fill="#454a9c"/><path d="M5.8 1.5 L4.6 2.6 L3.2 4" fill="none" stroke="#e0d020" stroke-width="0.9"/><circle cx="5.4" cy="1.9" r="0.8" fill="#e0d020"/></svg>
<div style="position:absolute;left:1px;right:1px;top:41px;height:16px;background:#f7f6f5;border:1px solid #d6d3cf;box-sizing:border-box"></div><div class="tab" style="left:1.4px;top:28.6px;width:28.8px;height:12.4px;"></div><span class="lbl" style="left:12.70px;top:33.00px;font-size:5.8px;line-height:5.8px;color:#636363;letter-spacing:0.113px;font-family:'DejaVu Sans',sans-serif;">Shell</span><div class="tab" style="left:31.4px;top:28.6px;width:50px;height:12.4px;"></div><span class="lbl" style="left:43.70px;top:33.00px;font-size:5.8px;line-height:5.8px;color:#636363;letter-spacing:0.052px;font-family:'DejaVu Sans',sans-serif;">Explorateur</span><div class="tab" style="left:82.5px;top:28.6px;width:40.5px;height:12.4px;"></div><span class="lbl" style="left:94.70px;top:33.00px;font-size:5.8px;line-height:5.8px;color:#636363;letter-spacing:-0.007px;font-family:'DejaVu Sans',sans-serif;">*(App1)*</span><div class="tab on" style="left:123.6px;top:27.4px;width:46.8px;height:14.6px;"></div><span class="lbl" style="left:136.30px;top:33.00px;font-size:5.8px;line-height:5.8px;color:#3c3c3c;letter-spacing:-0.076px;font-family:'DejaVu Sans',sans-serif;">*(Frame1)*</span><svg class="ic" style="left:3.6px;top:31.4px" width="7.4" height="7.6" viewBox="0 0 7.4 7.6"><circle cx="3.6" cy="3.2" r="3" fill="#9cacec" stroke="#6070c8" stroke-width="0.6"/><path d="M0.8 3.2 H6.4 M3.6 0.4 V6 M1.6 1.2 C3 2.6 4.2 2.6 5.6 1.2" fill="none" stroke="#dce4fc" stroke-width="0.6"/><path d="M1.8 7.1 H5.4 M3.6 6 V7" stroke="#4a58b8" stroke-width="0.8"/></svg><svg class="ic" style="left:34.4px;top:31.6px" width="8" height="8" viewBox="0 0 8 8"><path d="M0.4 1.4 L2 0.4 H4.6 L6 1.4 V6 H0.4 Z" fill="#e8d868" stroke="#8a7a18" stroke-width="0.6"/><circle cx="3.4" cy="3.2" r="1.5" fill="#40c0e8" stroke="#2060a0" stroke-width="0.5"/><path d="M4.6 4.4 L7 7" stroke="#1830a0" stroke-width="1.2"/></svg><svg class="ic" style="left:85.4px;top:31.8px" width="8.4" height="7.4" viewBox="0 0 8.4 7.4"><rect x="1.8" y="0.4" width="6" height="4.8" fill="#f0f0f4" stroke="#303078" stroke-width="0.7"/><rect x="1.8" y="0.4" width="6" height="1.5" fill="#303090"/><rect x="0.4" y="2.8" width="3.2" height="3.8" fill="#c8c060" stroke="#5a5a28" stroke-width="0.6"/><path d="M3 6.8 H6" stroke="#404040" stroke-width="0.8"/></svg><svg class="ic" style="left:126.8px;top:31.4px" width="7.4" height="7" viewBox="0 0 7.4 7"><rect x="0.5" y="0.5" width="6.2" height="5.6" fill="#fafafa" stroke="#55556a" stroke-width="0.7"/><rect x="0.3" y="0.3" width="6.6" height="1.5" fill="#34348c"/></svg>
<div class="tab" style="left:2px;top:43.8px;width:26.2px;height:12.7px;"></div><span class="lbl" style="left:5.60px;top:49.00px;font-size:5.8px;line-height:5.8px;color:#636363;letter-spacing:-0.044px;font-family:'DejaVu Sans',sans-serif;">Source</span><div class="tab" style="left:29.8px;top:43.8px;width:33px;height:12.7px;"></div><span class="lbl" style="left:33.60px;top:49.00px;font-size:5.8px;line-height:5.8px;color:#636363;letter-spacing:-0.035px;font-family:'DejaVu Sans',sans-serif;">Naviguer</span><div class="tab" style="left:64px;top:43.8px;width:42.8px;height:12.7px;"></div><span class="lbl" style="left:67.70px;top:49.00px;font-size:5.8px;line-height:5.8px;color:#636363;letter-spacing:-0.089px;font-family:'DejaVu Sans',sans-serif;">Evénements</span><div class="tab on wh" style="left:107.6px;top:42.5px;width:32.8px;height:15px;"></div><span class="lbl" style="left:112.00px;top:48.00px;font-size:5.8px;line-height:5.8px;color:#3c3c3c;letter-spacing:0.029px;font-family:'DejaVu Sans',sans-serif;">Données</span><div class="tab" style="left:141.6px;top:43.8px;width:24.2px;height:12.7px;"></div><span class="lbl" style="left:145.70px;top:49.00px;font-size:5.8px;line-height:5.8px;color:#636363;letter-spacing:-0.203px;font-family:'DejaVu Sans',sans-serif;">Sizers</span>
<div id="area" style="position:absolute;left:1.5px;top:56.5px;width:682px;height:368.5px;background:#fff;border-left:1px solid #d6d3cf;border-top:1px solid #d6d3cf;border-right:2px solid #d6d3cf;box-sizing:content-box"></div><div style="position:absolute;left:0;right:0;top:426px;height:3px;background:#d5d2ce"></div><div style="position:absolute;left:0;right:0;top:429px;height:3px;background:#f5f4f3"></div><div class="fld" style="left:0.6px;top:432px;width:10.6px;height:11.5px"></div><div class="fld" style="left:11.6px;top:432px;width:15.6px;height:11.5px"></div><div class="fld" style="left:28px;top:432px;width:191.6px;height:11.5px"></div><div class="fld" style="left:220.4px;top:432px;width:11.4px;height:11.5px"></div><div class="fld" style="left:232.6px;top:432px;width:71.6px;height:11.5px"></div><div class="fld" style="left:305px;top:432px;width:382px;height:11.5px;border-right:none"></div><div style="position:absolute;left:234.5px;top:434px;width:68px;height:8px;border-radius:2.5px;background:#dddbd8;box-shadow:inset 0 0.5px 0.5px #cfccc8"></div><span class="lbl" style="left:30.00px;top:436.00px;font-size:5.8px;line-height:5.8px;color:#4a4a4a;letter-spacing:-0.069px;font-family:'DejaVu Sans',sans-serif;">Session de l'éditeur graphique démarrée</span><span class="lbl" style="left:222.20px;top:436.00px;font-size:5.8px;line-height:5.8px;color:#4a4a4a;letter-spacing:-0.090px;font-family:'DejaVu Sans',sans-serif;">0</span><svg class="ic" style="left:2.6px;top:432.2px" width="8" height="8" viewBox="0 0 8 8"><circle cx="3.8" cy="3.4" r="3.2" fill="#f4f4fa" stroke="#8a8a98" stroke-width="0.5"/><path d="M2.4 6 L3 7.8 L4.4 6.2" fill="#f4f4fa" stroke="#8a8a98" stroke-width="0.4"/><path d="M3.8 2.8 V5 M3.8 1.4 V2" stroke="#1818c0" stroke-width="1"/></svg><div style="position:absolute;left:12.6px;top:433.7px;width:5.8px;height:5.8px;border-radius:1px;background:#e4e2df;box-shadow:0 0 0 0.5px #d6d3cf"></div><div style="position:absolute;left:14.8px;top:435.9px;width:1.4px;height:1.4px;border-radius:50%;background:#9ac4f0"></div><div style="position:absolute;left:20.4px;top:433.7px;width:5.8px;height:5.8px;border-radius:1px;background:#e4e2df;box-shadow:0 0 0 0.5px #d6d3cf"></div><div style="position:absolute;left:22.6px;top:435.9px;width:1.4px;height:1.4px;border-radius:50%;background:#9ac4f0"></div>
<div id="bloc" style="position:absolute;left:109px;top:84px;width:392px;height:299.4px;background:#f2f1f0;box-shadow:0 0.3px 1.6px 0.4px rgba(90,88,85,0.5);border-radius:3.5px 3.5px 0 0;overflow:hidden"><div style="position:absolute;left:0;right:0;top:13px;bottom:0;border:1px solid #c6c4c1;border-top:none;box-sizing:border-box"></div><div class="tb" style="height:13px;"><svg class="ic" style="left:5.6px;top:3.6px" width="23.6" height="6.4" viewBox="0 0 23.6 6.4"><circle cx="3.2" cy="3.2" r="3.2" fill="#5d5b56"/><g transform="translate(3.2 3.2)"><path d="M-1.1 -1.1 L1.1 1.1 M1.1 -1.1 L-1.1 1.1" stroke="#42413c" stroke-width="0.7"/></g><circle cx="11.8" cy="3.2" r="3.2" fill="#5d5b56"/><g transform="translate(11.8 3.2)"><path d="M-1.5 0 H1.5" stroke="#42413c" stroke-width="0.8"/></g><circle cx="20.4" cy="3.2" r="3.2" fill="#5d5b56"/><g transform="translate(20.4 3.2)"><rect x="-1.3" y="-1.3" width="2.6" height="2.6" fill="none" stroke="#42413c" stroke-width="0.6"/></g></svg><span class="lbl" style="left:36.50px;top:5.00px;font-size:5.4px;line-height:5.4px;color:#96928b;letter-spacing:0.135px;font-weight:bold;font-family:'DejaVu Sans',sans-serif;">Bloc-note</span></div><div style="position:absolute;left:1px;right:1px;top:13px;height:9px;background:#f5f4f3;border-bottom:1px solid #fbfbfa"></div><span class="lbl" style="left:2.50px;top:17.00px;font-size:5.8px;line-height:5.8px;color:#4a4a4a;letter-spacing:0.044px;font-family:'DejaVu Sans',sans-serif;">Etat</span></div>
<div id="pop" style="position:absolute;left:164.4px;top:163.2px;width:96.6px;height:132.4px;background:#fff;box-shadow:0 0.5px 2.2px 1px rgba(60,58,55,0.68);border-radius:4px 4px 0 0;overflow:hidden"><div class="tb" style="height:13.2px;background:linear-gradient(#504f49,#3e3d39)"><div style="position:absolute;left:4.6px;top:3px;width:7.4px;height:7.4px;border-radius:50%;background:radial-gradient(circle at 50% 30%,#f4906a,#e05a2c 70%,#c8481e)"></div><svg class="ic" style="left:4.8px;top:3.2px" width="24.2" height="7" viewBox="0 0 24.2 7"><circle cx="3.5" cy="3.5" r="3.5" fill="none"/><g transform="translate(3.5 3.5)"><path d="M-1.1 -1.1 L1.1 1.1 M1.1 -1.1 L-1.1 1.1" stroke="#3a3935" stroke-width="0.7"/></g><circle cx="12.1" cy="3.5" r="3.5" fill="#807e78"/><g transform="translate(12.1 3.5)"><path d="M-1.5 0 H1.5" stroke="#3a3935" stroke-width="0.8"/></g><circle cx="20.7" cy="3.5" r="3.5" fill="#807e78"/><g transform="translate(20.7 3.5)"><rect x="-1.3" y="-1.3" width="2.6" height="2.6" fill="none" stroke="#3a3935" stroke-width="0.6"/></g></svg><span class="lbl" style="left:35.60px;top:4.80px;font-size:5.6px;line-height:5.6px;color:#f6f4ee;letter-spacing:-0.149px;font-weight:bold;font-family:'DejaVu Sans',sans-serif;">statusBar1.Fiel</span><span class="lbl" style="left:82.20px;top:4.80px;font-size:5.6px;line-height:5.6px;color:#6e6c66;letter-spacing:0.000px;font-weight:bold;font-family:'DejaVu Sans',sans-serif;width:3.3px;overflow:hidden;">d</span></div><div style="position:absolute;left:0;right:0;top:13.2px;height:14.6px;background:#f2f1f0;border-bottom:1px solid #d9d6d2;box-sizing:border-box"></div><div style="position:absolute;left:0;width:87px;top:27.8px;height:12.4px;background:linear-gradient(#f8f7f6,#e7e5e3);border-right:1px solid #dedbd7;box-sizing:border-box"></div><div style="position:absolute;left:87px;right:0;top:27.8px;height:12.4px;background:linear-gradient(#f8f7f6,#e7e5e3)"></div><span class="lbl" style="left:3.60px;top:31.80px;font-size:5.8px;line-height:5.8px;color:#4a4a4a;letter-spacing:0.231px;font-family:'DejaVu Sans',sans-serif;">Nom</span><div style="position:absolute;left:0.6px;width:86.4px;top:40.2px;height:9px;background:linear-gradient(#f38a5c,#e96a35)"></div><span class="lbl" style="left:1.40px;top:42.80px;font-size:5.8px;line-height:5.8px;color:#fff;letter-spacing:0.011px;font-family:'DejaVu Sans',sans-serif;">Etat</span><svg class="ic" style="left:2.9px;top:15.4px" width="8" height="8.4" viewBox="0 0 8 8.4"><path d="M2 1.7 H5.6 L7.4 3.4 V8 H2 Z" fill="#a8ccf4" stroke="#7860c0" stroke-width="0.8"/><path d="M5.4 1.8 V3.6 H7.2" fill="none" stroke="#7860c0" stroke-width="0.5"/><path d="M2.2 0.3 V4.5 M0.1 2.4 H4.3 M0.8 1 L3.6 3.8 M3.6 1 L0.8 3.8" stroke="#f6f030" stroke-width="0.8"/><circle cx="2.2" cy="2.4" r="0.8" fill="#f0a818"/></svg><svg class="ic" style="left:16.2px;top:15.4px" width="8" height="8.4" viewBox="0 0 8 8.4"><path d="M2 1.7 H5.6 L7.4 3.4 V8 H2 Z" fill="#a8ccf4" stroke="#7860c0" stroke-width="0.8"/><path d="M5.4 1.8 V3.6 H7.2" fill="none" stroke="#7860c0" stroke-width="0.5"/><path d="M0.6 0.7 L3.8 3.9 M3.8 0.7 L0.6 3.9" stroke="#9c1212" stroke-width="1.2"/></svg><div class="sep" style="left:29.2px;top:15.8px;height:8px"></div><svg class="ic" style="left:36.2px;top:16px" width="7.6" height="7.4" viewBox="0 0 7.6 7.4"><path d="M3.8 0.5 L7.1 3.7 H5.2 V6.8 H2.4 V3.7 H0.5 Z" fill="#d4e4fa" stroke="#4a84d0" stroke-width="0.9"/></svg><svg class="ic" style="left:50px;top:15.6px" width="7.6" height="7.4" viewBox="0 0 7.6 7.4"><path d="M3.8 6.9 L7.1 3.6 H5.2 V0.5 H2.4 V3.6 H0.5 Z" fill="#9cc2f0" stroke="#6a9ede" stroke-width="0.7"/></svg><div class="sep" style="left:62.2px;top:15.8px;height:8px"></div><svg class="ic" style="left:69px;top:15.4px" width="6.2" height="7.8" viewBox="0 0 6.2 7.8"><path d="M0.3 0.3 H4.2 L5.9 2 V7.5 H0.3 Z" fill="#4a84c8"/><path d="M1.6 3.2 A1.7 1.7 0 0 1 4.4 2.8 M4.6 4.6 A1.7 1.7 0 0 1 1.8 5.2" fill="none" stroke="#f0f6fc" stroke-width="0.9"/></svg></div>
<svg class="ic" style="left:52.6px;top:111.6px" width="8" height="10" viewBox="0 0 8 10"><path d="M0.8 0.8 V8.4 L2.8 6.6 L4 9 L5 8.5 L3.9 6.2 L6.4 6 Z" fill="#fff" stroke="#3a3a3a" stroke-width="0.8" stroke-linejoin="round"/></svg>
</div>
</body>
</html>
